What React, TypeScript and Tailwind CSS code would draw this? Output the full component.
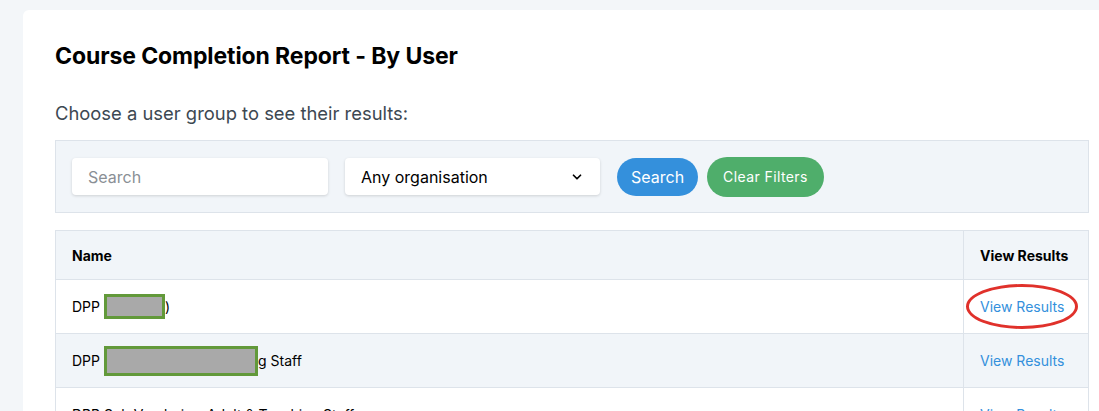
import { ChevronDown } from "lucide-react";

const rows = [
  { before: "DPP", redact: "w-[61px] h-[25px]", after: ")" },
  { before: "DPP", redact: "w-[154px] h-[30px]", after: "g Staff" },
  { before: "DPP Sub Vandaria – Adult & Teaching Staff", redact: "", after: "" },
];

export default function App() {
  return (
    <div className="h-[411px] w-[1099px] overflow-hidden bg-[#f3f6f9] pl-[23px] pt-[10px] font-['Inter','Liberation_Sans',sans-serif] text-black">
      <div className="w-[1098px] rounded-md bg-white px-8 pt-[32px] pb-8">
        <h1 className="text-[23px] font-bold leading-[28px] tracking-[-0.1px]">Course Completion Report - By User</h1>
        <p className="mt-[31px] text-[18.4px] leading-[24px] text-[#3d4852]">Choose a user group to see their results:</p>

        <div className="mt-[15px] flex h-[73px] items-center gap-[17px] border border-[#dde3ea] bg-[#f1f5f9] px-4">
          <input
            placeholder="Search"
            className="h-[37px] w-[256px] rounded bg-white px-4 text-[16px] shadow-[0_1px_3px_rgba(0,0,0,0.15)] outline-none placeholder:text-[#8a8f95]"
          />
          <div className="flex h-[37px] w-[255px] items-center justify-between rounded bg-white px-4 text-[16px] shadow-[0_1px_3px_rgba(0,0,0,0.15)]">
            <span>Any organisation</span>
            <ChevronDown className="size-[14px]" strokeWidth={3} />
          </div>
          <div className="flex items-center gap-[9px]">
            <button className="h-[38px] rounded-full bg-[#3490dc] px-[14px] text-[16px] text-white">Search</button>
            <button className="h-[40px] rounded-full bg-[#4fae6b] px-[16px] text-[14px] tracking-[0.4px] text-white">Clear Filters</button>
          </div>
        </div>

        <table className="mt-[17px] w-full border-collapse border border-[#dde3ea] text-[14px]">
          <thead>
            <tr className="h-[49px] bg-[#f1f5f9]">
              <th className="border border-[#dde3ea] px-4 text-left font-bold">Name</th>
              <th className="w-[125px] border border-[#dde3ea] px-4 text-left font-bold">View Results</th>
            </tr>
          </thead>
          <tbody>
            {rows.map((r, i) => (
              <tr key={i} className={`h-[54px] ${i % 2 === 1 ? "bg-[#f1f5f9]" : "bg-white"}`}>
                <td className="border border-[#dde3ea] px-4">
                  <span className="flex items-center">
                    <span>{r.before}</span>
                    {r.redact && (
                      <span className={`ml-[4px] inline-block border-[3px] border-[#62993a] bg-[#a9a9a9] ${r.redact}`} />
                    )}
                    <span>{r.after}</span>
                  </span>
                </td>
                <td className="border border-[#dde3ea] px-4">
                  <span className="relative inline-block text-[#3490dc]">
                    View Results
                    {i === 0 && (
                      <span className="absolute -left-[14px] -right-[14px] -top-[12px] -bottom-[12px] rounded-[50%] border-[3px] border-[#e0312b]" />
                    )}
                  </span>
                </td>
              </tr>
            ))}
          </tbody>
        </table>
      </div>
    </div>
  );
}
